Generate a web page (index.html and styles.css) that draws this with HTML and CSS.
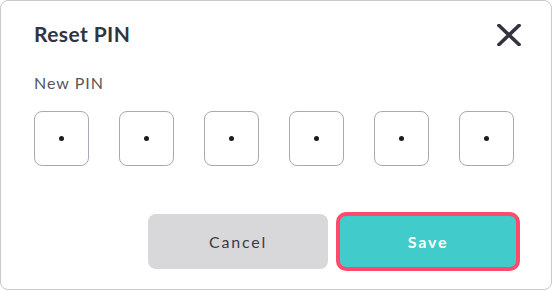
FILE: index.html
```html
<!DOCTYPE html>
<html lang="en">
<head>
  <meta charset="UTF-8">
  <meta name="viewport" content="width=device-width, initial-scale=1.0">
  <title>Reset PIN</title>
  <link rel="stylesheet" href="styles.css">
</head>
<body>
  <div class="dialog">
    <div class="dialog-header">
      <h2 class="title">Reset PIN</h2>
      <button class="close" aria-label="Close">
        <svg width="24" height="22" viewBox="0 0 24 22">
          <path d="M2 1.5 L22 20.5 M22 1.5 L2 20.5" stroke="#33343f" stroke-width="3.6" stroke-linecap="square" fill="none"/>
        </svg>
      </button>
    </div>

    <label class="label">New PIN</label>
    <div class="pin-row">
      <div class="pin-box"><span class="dot"></span></div>
      <div class="pin-box"><span class="dot"></span></div>
      <div class="pin-box"><span class="dot"></span></div>
      <div class="pin-box"><span class="dot"></span></div>
      <div class="pin-box"><span class="dot"></span></div>
      <div class="pin-box"><span class="dot"></span></div>
    </div>

    <div class="actions">
      <button class="button cancel">Cancel</button>
      <button class="button save">Save</button>
    </div>
  </div>
</body>
</html>
```

FILE: styles.css
```css
body {
  margin: 0;
  font-family: 'Lato', 'Inter', sans-serif;
  background: #fff;
}
.dialog {
  box-sizing: border-box;
  width: 552px;
  height: 290px;
  border: 1px solid #c9c9c9;
  border-radius: 8px;
  padding: 0 33px;
  background: #fff;
}
.dialog-header {
  display: flex;
  justify-content: space-between;
  align-items: center;
  height: 34px;
  margin-top: 17px;
}
.title {
  margin: 0 0 3px;
  font-size: 21px;
  font-weight: 700;
  color: #33343f;
  letter-spacing: 0.4px;
}
.close {
  background: none;
  border: none;
  padding: 0;
  margin-right: -3px;
  cursor: pointer;
  display: flex;
}
.label {
  display: block;
  margin-top: 21px;
  font-size: 16px;
  color: #55565f;
  letter-spacing: 1px;
}
.pin-row {
  display: flex;
  gap: 30px;
  margin-top: 19px;
}
.pin-box {
  box-sizing: border-box;
  width: 55px;
  height: 55px;
  border: 1px solid #a9a9b5;
  border-radius: 8px;
  display: flex;
  justify-content: center;
  align-items: center;
}
.dot {
  width: 5px;
  height: 5px;
  border-radius: 50%;
  background: #1c1c1c;
}
.actions {
  display: flex;
  justify-content: flex-end;
  gap: 10px;
  margin-top: 48px;
}
.button {
  box-sizing: border-box;
  width: 180px;
  height: 55px;
  border: none;
  border-radius: 8px;
  font-family: 'Lato', 'Inter', sans-serif;
  font-size: 16px;
  letter-spacing: 1.8px;
  cursor: pointer;
}
.cancel {
  background-color: #d8d8db;
  color: #3a3b46;
  font-weight: 400;
}
.save {
  background-color: #42cbcb;
  color: #fff;
  font-weight: 700;
  border: 2px solid #ff4b6b;
  box-shadow: 0 0 0 2px #ff4b6b;
}
```
